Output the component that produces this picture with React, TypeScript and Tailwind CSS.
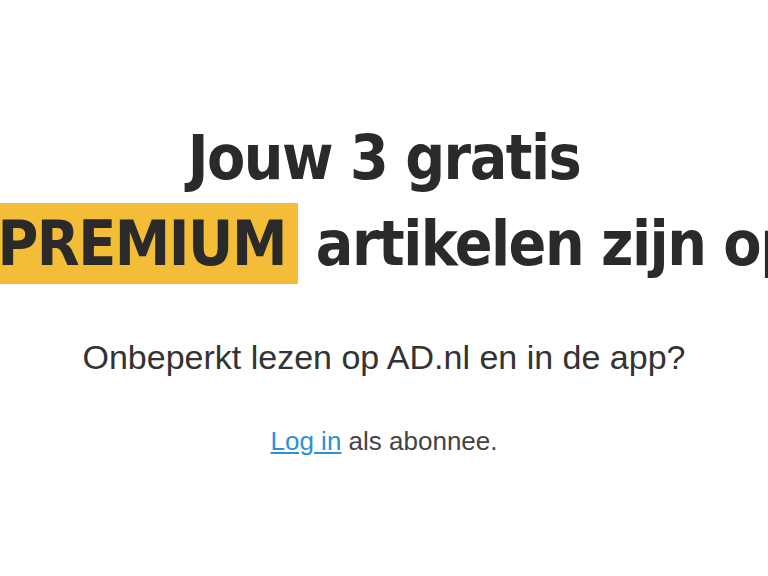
export default function App() {
  return (
    <div className="min-h-screen w-full overflow-hidden bg-white">
      <div className="flex flex-col items-center pt-[115px]">
        <h1
          className="flex flex-col items-center whitespace-nowrap text-[62px] font-bold leading-[86px] tracking-[-1.5px] text-[#2a2a2a]"
          style={{ fontFamily: '"DejaVu Sans Condensed", "DejaVu Sans", sans-serif' }}
        >
          <span>Jouw 3 gratis</span>
          <span className="pl-4">
            <span className="inline-block bg-[#f4bd38] px-3 leading-[81px]">PREMIUM</span> artikelen zijn op
          </span>
        </h1>
        <p
          className="mt-[50px] text-[34px] leading-10 text-[#333333]"
          style={{ fontFamily: '"Liberation Sans", Arial, sans-serif' }}
        >
          Onbeperkt lezen op AD.nl en in de app?
        </p>
        <p
          className="mt-[48px] text-[26px] leading-8 text-[#444444]"
          style={{ fontFamily: '"Liberation Sans", Arial, sans-serif' }}
        >
          <a href="#" className="text-[#2e8fd3] underline">
            Log in
          </a>{' '}
          als abonnee.
        </p>
      </div>
    </div>
  );
}
